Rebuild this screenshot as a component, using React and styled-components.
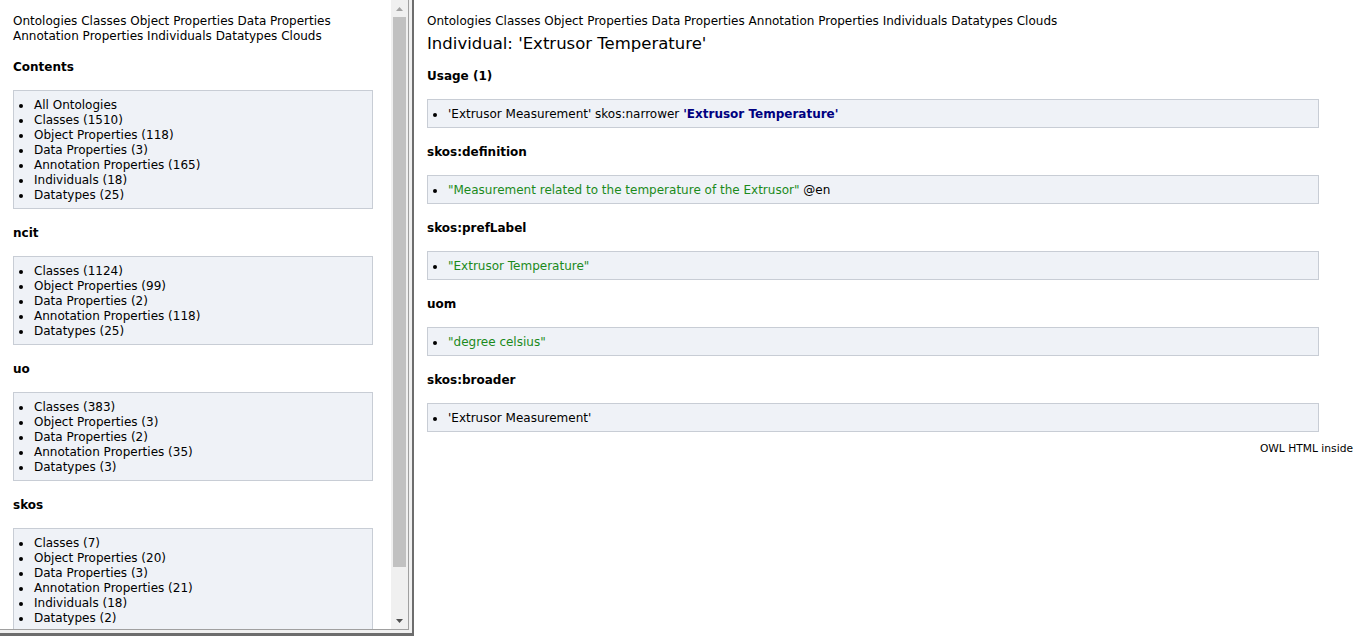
import styled, {createGlobalStyle} from 'styled-components'

const GlobalStyle = createGlobalStyle`
  html, body {
    margin: 0;
    padding: 0;
    height: 100%;
    overflow: hidden;
    background: #fff;
  }
  body {
    font-family: 'DejaVu Sans', Verdana, sans-serif;
    font-size: 12px;
    color: #000;
  }
`

const navLinks = [
  'Ontologies',
  'Classes',
  'Object Properties',
  'Data Properties',
  'Annotation Properties',
  'Individuals',
  'Datatypes',
  'Clouds',
]

const ontologyGroups = [
  {
    title: 'Contents',
    items: [
      'All Ontologies',
      'Classes (1510)',
      'Object Properties (118)',
      'Data Properties (3)',
      'Annotation Properties (165)',
      'Individuals (18)',
      'Datatypes (25)',
    ],
  },
  {
    title: 'ncit',
    items: [
      'Classes (1124)',
      'Object Properties (99)',
      'Data Properties (2)',
      'Annotation Properties (118)',
      'Datatypes (25)',
    ],
  },
  {
    title: 'uo',
    items: [
      'Classes (383)',
      'Object Properties (3)',
      'Data Properties (2)',
      'Annotation Properties (35)',
      'Datatypes (3)',
    ],
  },
  {
    title: 'skos',
    items: [
      'Classes (7)',
      'Object Properties (20)',
      'Data Properties (3)',
      'Annotation Properties (21)',
      'Individuals (18)',
      'Datatypes (2)',
    ],
  },
]

export default function App() {
  return (
    <>
      <GlobalStyle />
      <Page>
        <LeftFrame>
          <LeftInner>
            <LeftContent>
              <Nav $after={-1}>
                {navLinks.map(link => (
                  <NavLink key={link}>{link} </NavLink>
                ))}
              </Nav>
              {ontologyGroups.map(group => (
                <Section key={group.title}>
                  <Heading>{group.title}</Heading>
                  <Box>
                    {group.items.map(item => (
                      <Item key={item}>
                        <Bullet />
                        <span>{item}</span>
                      </Item>
                    ))}
                  </Box>
                </Section>
              ))}
            </LeftContent>
            <Scrollbar>
              <ScrollArrow>
                <svg width="7" height="4" viewBox="0 0 7 4">
                  <path d="M3.5 0 L7 4 L0 4 Z" fill="#a3a3a3" />
                </svg>
              </ScrollArrow>
              <ScrollTrack>
                <Thumb />
              </ScrollTrack>
              <ScrollArrow>
                <svg width="7" height="4" viewBox="0 0 7 4">
                  <path d="M0 0 L7 0 L3.5 4 Z" fill="#505050" />
                </svg>
              </ScrollArrow>
            </Scrollbar>
          </LeftInner>
        </LeftFrame>

        <RightFrame>
          <Nav>
            {navLinks.map(link => (
              <NavLink key={link}>{link} </NavLink>
            ))}
          </Nav>
          <Title>Individual: 'Extrusor Temperature'</Title>

          <Heading>Usage (1)</Heading>
          <Box $wide>
            <Item>
              <Bullet />
              <span>
                'Extrusor Measurement' skos:narrower{' '}
                <Strong>'Extrusor Temperature'</Strong>
              </span>
            </Item>
          </Box>

          <Heading>skos:definition</Heading>
          <Box $wide>
            <Item>
              <Bullet />
              <span>
                <Literal>"Measurement related to the temperature of the Extrusor"</Literal> @en
              </span>
            </Item>
          </Box>

          <Heading>skos:prefLabel</Heading>
          <Box $wide>
            <Item>
              <Bullet />
              <Literal>"Extrusor Temperature"</Literal>
            </Item>
          </Box>

          <Heading>uom</Heading>
          <Box $wide>
            <Item>
              <Bullet />
              <Literal>"degree celsius"</Literal>
            </Item>
          </Box>

          <Heading>skos:broader</Heading>
          <Box $wide>
            <Item>
              <Bullet />
              <span>'Extrusor Measurement'</span>
            </Item>
          </Box>

          <Footer>OWL HTML inside</Footer>
        </RightFrame>
      </Page>
    </>
  )
}

const Page = styled.div`
  display: flex;
  width: 1366px;
  height: 636px;
  overflow: hidden;
`
const LeftFrame = styled.div`
  flex: none;
  width: 414px;
  height: 636px;
  box-sizing: border-box;
  background: #f0f0f0;
  border-right: 2px solid #6d6d6d;
  border-bottom: 3px solid #6d6d6d;
  padding: 0 3px 3px 0;
`
const LeftInner = styled.div`
  display: flex;
  height: 100%;
  box-sizing: border-box;
  background: #fff;
  border-right: 1px solid #a0a0a0;
  border-bottom: 1px solid #a0a0a0;
  overflow: hidden;
`
const LeftContent = styled.div`
  flex: 1;
  display: flex;
  flex-direction: column;
  padding: 14px 18px 0 13px;
  overflow: hidden;
`
const Scrollbar = styled.div`
  flex: none;
  width: 17px;
  display: flex;
  flex-direction: column;
  background: #f0f0f0;
`
const ScrollArrow = styled.div`
  height: 17px;
  display: flex;
  align-items: center;
  justify-content: center;
`
const ScrollTrack = styled.div`
  flex: 1;
  padding: 0 2px;
`
const Thumb = styled.div`
  height: 550px;
  background: #c1c1c1;
`
const Nav = styled.div`
  line-height: 15px;
  margin-bottom: ${p => p.$after || 0}px;
`
const NavLink = styled.span`
  color: #000;
`
const Section = styled.div`
  display: flex;
  flex-direction: column;
`
const Heading = styled.div`
  font-weight: bold;
  font-size: 12px;
  line-height: 16px;
  margin: 16px 0 15px;
`
const Box = styled.div`
  background: #eff2f7;
  border: 1px solid #c8cdd5;
  padding: 7px 6px 5px 5px;
  margin-right: ${p => (p.$wide ? '34px' : '0')};
`
const Item = styled.div`
  display: flex;
  align-items: center;
  line-height: 15px;
`
const Bullet = styled.span`
  flex: none;
  width: 4px;
  height: 4px;
  border-radius: 50%;
  background: #000;
  margin: 1px 11px 0 0;
`
const RightFrame = styled.div`
  flex: 1;
  display: flex;
  flex-direction: column;
  padding: 14px 13px 0 13px;
`
const Title = styled.div`
  font-size: 16.5px;
  line-height: 22px;
  margin-top: 4px;
  margin-bottom: -3px;
`
const Strong = styled.span`
  font-weight: bold;
  color: #000080;
`
const Literal = styled.span`
  color: #1b8a1b;
`
const Footer = styled.div`
  text-align: right;
  font-size: 10.7px;
  line-height: 14px;
  margin-top: 10px;
`
